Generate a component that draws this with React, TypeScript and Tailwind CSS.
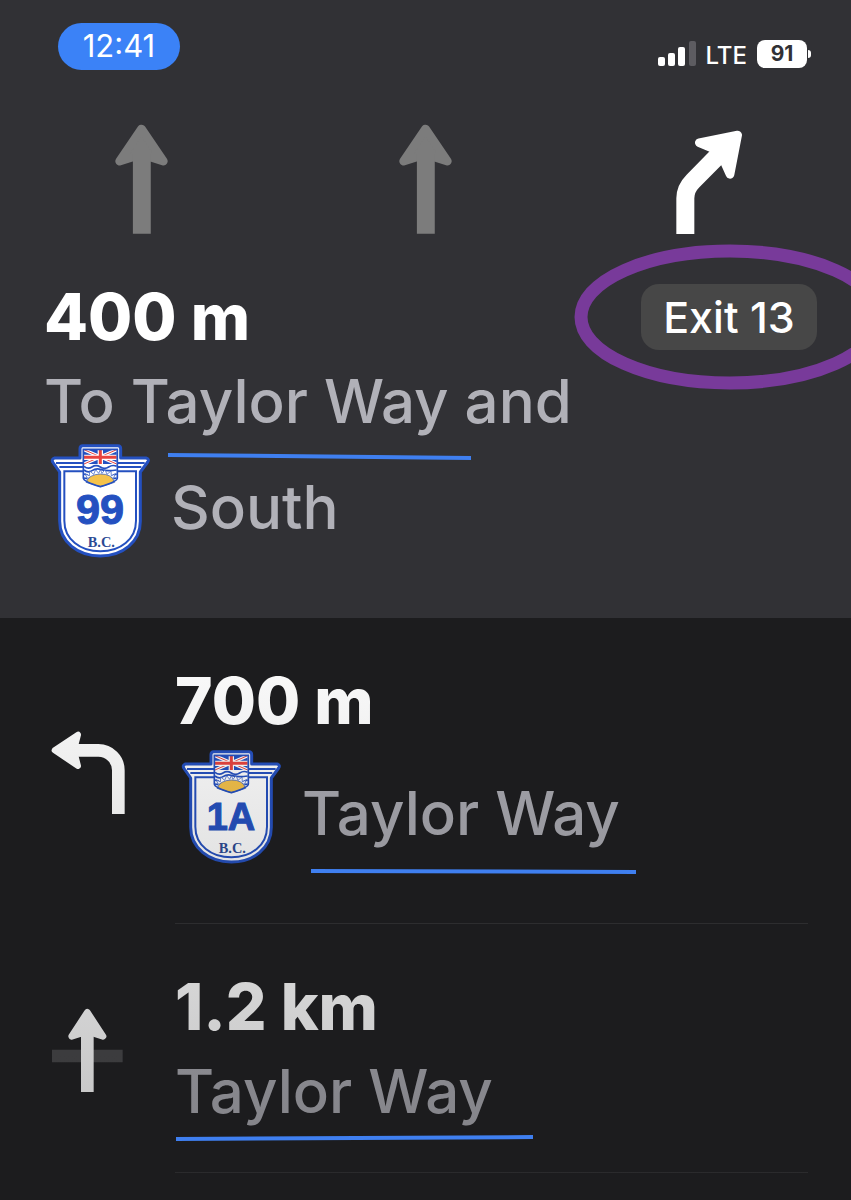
import React from "react";

interface ShieldProps {
  route: string;
  routeSize: number;
}

interface StepProps {
  distance: string;
  icon: React.ReactNode;
  children: React.ReactNode;
}

const LaneArrow: React.FC = () => (
  <svg viewBox="75 42 160 330" className="w-[53px] h-[110px] text-[#7c7c7c]" fill="currentColor" stroke="currentColor">
    <path d="M155 56 221 153 183 141 127 141 89 153Z" strokeWidth="26" strokeLinejoin="round" />
    <path d="M129 130H183V372H129Z" stroke="none" />
  </svg>
);

const ExitArrow: React.FC = () => (
  <svg viewBox="79 60 201 312" className="w-[67px] h-[104px] text-white" fill="currentColor" stroke="currentColor">
    <path d="M264 75 241 193 210 124 149 98Z" strokeWidth="26" strokeLinejoin="round" />
    <path d="M107 372V265Q107 236 130 213L208 134" fill="none" strokeWidth="54" />
  </svg>
);

const LeftTurn: React.FC = () => (
  <svg viewBox="63 90 225 249" className="w-[75px] h-[83px] text-white" fill="currentColor" stroke="currentColor">
    <path d="M74 148 144 101 132 148 144 195Z" strokeWidth="18" strokeLinejoin="round" />
    <path d="M132 148H205A60 60 0 0 1 265 208V339" fill="none" strokeWidth="38" />
  </svg>
);

const StraightAcross: React.FC = () => (
  <svg viewBox="63 51 216 252" className="w-[72px] h-[84px] text-white" fill="currentColor" stroke="currentColor">
    <path d="M66 176H278V214H66Z" className="text-[#454547]" stroke="none" />
    <path d="M172 64 219 136 172 121 125 136Z" strokeWidth="20" strokeLinejoin="round" />
    <path d="M153 120H191V303H153Z" stroke="none" />
  </svg>
);

// British Columbia route marker
const Shield: React.FC<ShieldProps> = ({ route, routeSize }) => (
  <svg viewBox="32 27 303 345" className="w-[101px] h-[115px] shrink-0" role="img" aria-label={`BC ${route}`}>
    <path
      d="M46 72H122V44Q122 35 130 35H236Q244 35 244 44V72H320Q331 75 325 84L303 114V262C303 324 250 366 183 366S61 324 61 262V114L40 84Q36 75 46 72Z"
      fill="#fff"
      stroke="#2450c0"
      strokeWidth="9"
      strokeLinejoin="round"
    />
    <path d="M50 87H316M60 99H306" stroke="#2450c0" strokeWidth="6" />
    <path
      d="M75 112H290V260C290 316 243 352 183 352S75 316 75 260Z"
      fill="#fff"
      stroke="#2450c0"
      strokeWidth="6"
    />
    <path d="M132 46H234V132Q234 143 183 158Q132 143 132 132Z" fill="#fff" />
    <path d="M134 47H232V90H134Z" fill="#2450c0" />
    <path d="M134 47 232 90M232 47 134 90" stroke="#fff" strokeWidth="10" />
    <path d="M134 47 232 90M232 47 134 90" stroke="#e8433f" strokeWidth="3" />
    <path d="M183 47V90M134 70H232" stroke="#fff" strokeWidth="16" />
    <path d="M183 47V90M134 70H232" stroke="#e8433f" strokeWidth="9" />
    <path
      d="M134 97Q146 107 158 99T183 99T208 99T232 97M134 108Q146 118 158 110T183 106T208 110T232 108M134 120 146 124M232 120 220 124M134 132 144 134M232 132 222 134"
      fill="none"
      stroke="#2450c0"
      strokeWidth="5"
    />
    <path
      d="M143 132 138 119 150 126 151 111 163 121 169 107 178 118 183 107 188 118 197 107 203 121 215 111 216 126 228 119 223 132Z"
      fill="#fff"
      stroke="#2450c0"
      strokeWidth="2"
    />
    <path d="M140 145Q149 121 183 120T226 145L183 158Z" fill="#f4c24a" stroke="#2450c0" strokeWidth="2" />
    <path d="M132 46H234V132Q234 143 183 158Q132 143 132 132Z" fill="none" stroke="#2450c0" strokeWidth="5" />
    <text
      x="182"
      y="269"
      textAnchor="middle"
      fontSize={routeSize}
      className="font-['Liberation_Sans',sans-serif] font-bold"
      fill="#2450c0"
      stroke="#2450c0"
      strokeWidth="3"
    >
      {route}
    </text>
    <text
      x="186"
      y="339"
      textAnchor="middle"
      fontSize="43"
      className="font-['Liberation_Serif',serif] font-bold"
      fill="#2b4a94"
    >
      B.C.
    </text>
  </svg>
);

const StatusBar: React.FC = () => (
  <div className="flex items-start justify-between pt-[23px] pl-[58px] pr-10">
    <div className="flex h-[47px] w-[122px] items-center justify-center rounded-full bg-[#3b82f7] text-[31px] text-white">
      12:41
    </div>
    <div className="mt-4 flex h-[30px] items-center gap-[10px] text-white">
      <svg viewBox="0 0 38 26" className="h-[26px] w-[38px]" fill="currentColor">
        <rect x="0" y="16" width="7" height="9" rx="2" />
        <rect x="10" y="12" width="7" height="13" rx="2" />
        <rect x="20" y="6" width="7" height="19" rx="2" />
        <rect x="31" y="0" width="7" height="25" rx="2" fill="#5d5c61" />
      </svg>
      <span className="pt-[3px] text-[24px] font-medium">LTE</span>
      <div className="flex items-center gap-px">
        <span className="flex h-7 w-[50px] items-center justify-center rounded-lg bg-white text-[21px] font-bold text-[#313135]">
          91
        </span>
        <span className="h-2 w-[3px] rounded-r-full bg-white" />
      </div>
    </div>
  </div>
);

const Step: React.FC<StepProps> = ({ distance, icon, children }) => (
  <li className="flex pr-[43px]">
    <div className="flex w-[175px] shrink-0 items-center pt-[41px] pb-[39px] pl-[51px]">{icon}</div>
    <div className="min-w-0 flex-1 border-b border-[#303032] pt-[41px] pb-[39px]">
      <h2 className="text-[64px] leading-[84px] font-extrabold text-white">{distance}</h2>
      {children}
    </div>
  </li>
);

const App: React.FC = () => {
  return (
    <main className="min-h-screen overflow-hidden bg-[#1c1c1e] font-['Inter',sans-serif]">
      <header className="overflow-hidden bg-[#313135] pb-[60px]">
        <StatusBar />

        {/* Lane guidance */}
        <div className="mt-[54px] grid grid-cols-3 items-end justify-items-center">
          <LaneArrow />
          <LaneArrow />
          <ExitArrow />
        </div>

        <div className="mt-[41px] pl-11 pr-[34px] text-[60px] leading-[84px] font-medium text-[#b1b1b8]">
          <div className="flex items-center justify-between">
            <h1 className="text-[64px] leading-[84px] font-extrabold text-white">400 m</h1>
            <div className="relative flex h-[66px] w-44 items-center justify-center rounded-[18px] bg-[#474747] text-[43px] text-white">
              Exit 13
              <svg
                viewBox="0 0 312 146"
                className="pointer-events-none absolute -top-10 -left-[67px] h-[146px] w-[312px] max-w-none"
              >
                <ellipse cx="156" cy="73" rx="149" ry="66" fill="none" stroke="#783a9a" strokeWidth="13" />
              </svg>
            </div>
          </div>
          <div className="relative">
            <p>To Taylor Way and</p>
            <svg viewBox="0 0 303 8" className="absolute top-[94px] left-[124px] h-2 w-[303px]">
              <path d="M0 2 303 5" stroke="#3f7ff0" strokeWidth="4" />
            </svg>
          </div>
          <div className="flex items-center gap-5 pl-[6px]">
            <Shield route="99" routeSize={130} />
            <p className="pt-3">South</p>
          </div>
        </div>
      </header>

      <ul className="relative text-[60px] leading-[84px] font-medium text-[#a9a9b0]">
        <Step distance="700 m" icon={<LeftTurn />}>
          <div className="flex items-center gap-5 pt-[6px] pb-5 pl-[6px]">
            <Shield route="1A" routeSize={114} />
            <div className="relative pt-3">
              <p>Taylor Way</p>
              <svg viewBox="0 0 325 8" className="absolute top-[109px] left-[9px] z-10 h-2 w-[325px] max-w-none">
                <path d="M0 3 325 4" stroke="#3f7ff0" strokeWidth="4" />
              </svg>
            </div>
          </div>
        </Step>
        <Step distance="1.2 km" icon={<StraightAcross />}>
          <div className="relative">
            <p>Taylor Way</p>
            <svg viewBox="0 0 357 8" className="absolute top-[85px] left-px z-10 h-2 w-[357px] max-w-none">
              <path d="M0 5 357 3" stroke="#3f7ff0" strokeWidth="4" />
            </svg>
          </div>
        </Step>
        {/* Upcoming steps fade towards the bottom */}
        <li
          aria-hidden="true"
          className="pointer-events-none absolute inset-0 bg-linear-to-b from-[#1c1c1e]/0 to-[#1c1c1e]/28"
        />
      </ul>
    </main>
  );
};

export default App;
